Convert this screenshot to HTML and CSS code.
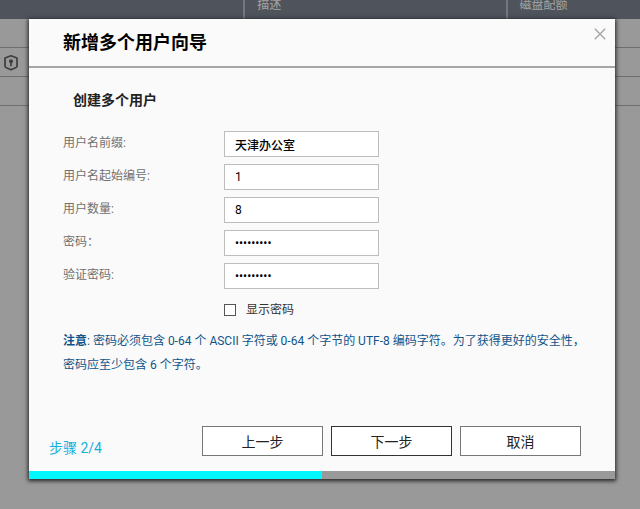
FILE: index.html
```html
<!DOCTYPE html>
<html lang="zh-CN">
<head>
    <meta charset="UTF-8">
    <meta name="viewport" content="width=device-width, initial-scale=1.0">
    <title>新增多个用户向导</title>
    <link rel="stylesheet" href="styles.css">
</head>
<body>
    <table class="user-table">
        <thead>
            <tr>
                <th class="col-name"></th>
                <th class="col-desc">描述</th>
                <th class="col-quota">磁盘配额</th>
            </tr>
        </thead>
        <tbody>
            <tr><td colspan="3"></td></tr>
            <tr>
                <td colspan="3">
                    <svg class="shield" viewBox="0 0 16 18" width="16" height="18">
                        <path d="M8 2.8 L14 5 V13.2 C14 14.2 11.4 15.4 8 16.8 C4.6 15.4 2 14.2 2 13.2 V5 Z" fill="none" stroke="#3d3d3d" stroke-width="1.7" stroke-linejoin="round"/>
                        <circle cx="8" cy="8.2" r="2" fill="#3d3d3d"/>
                        <path d="M7.2 9 H8.8 V13.2 H7.2 Z" fill="#3d3d3d"/>
                    </svg>
                </td>
            </tr>
            <tr><td colspan="3"></td></tr>
        </tbody>
    </table>

    <div class="overlay">
        <form class="wizard" role="dialog" aria-labelledby="wizardTitle">
            <header class="wizard-header">
                <h1 id="wizardTitle">新增多个用户向导</h1>
                <button type="button" class="close-button" aria-label="关闭">
                    <svg viewBox="0 0 12 12" width="12" height="12">
                        <path d="M0.8 0.8 L11.2 11.2 M11.2 0.8 L0.8 11.2" fill="none" stroke="#a6a6a6" stroke-width="1.5"/>
                    </svg>
                </button>
            </header>

            <div class="wizard-body">
                <h2>创建多个用户</h2>
                <div class="fields">
                    <label for="prefix">用户名前缀:</label>
                    <input type="text" id="prefix" value="天津办公室">
                    <label for="startNumber">用户名起始编号:</label>
                    <input type="text" id="startNumber" value="1">
                    <label for="userCount">用户数量:</label>
                    <input type="text" id="userCount" value="8">
                    <label for="password">密码：</label>
                    <input type="password" id="password" value="123456789">
                    <label for="verify">验证密码:</label>
                    <input type="password" id="verify" value="123456789">
                    <div class="show-password">
                        <input type="checkbox" id="showPassword">
                        <label for="showPassword">显示密码</label>
                    </div>
                </div>
                <p class="note"><b>注意</b>: 密码必须包含 0-64 个 ASCII 字符或 0-64 个字节的 UTF-8 编码字符。为了获得更好的安全性，密码应至少包含 6 个字符。</p>
            </div>

            <footer class="wizard-footer">
                <span class="step">步骤 2/4</span>
                <button type="button">上一步</button>
                <button type="button" class="next">下一步</button>
                <button type="button">取消</button>
            </footer>
            <div class="progress"><div class="progress-value" style="width: 50%"></div></div>
        </form>
    </div>
</body>
</html>
```
FILE: styles.css
```css
* {
    margin: 0;
    padding: 0;
    box-sizing: border-box;
}
body {
    background: #999;
    min-height: 100vh;
    font-family: Roboto, "Noto Sans CJK SC", sans-serif;
    font-size: 12px;
}
button, input {
    font-family: inherit;
}

/* user list behind the wizard */
.user-table {
    width: 100%;
    table-layout: fixed;
    border-collapse: separate;
    border-spacing: 0;
}
.user-table th {
    height: 19px;
    background: #4e535c;
    color: #999;
    font-weight: 500;
    line-height: 10px;
    text-align: left;
    vertical-align: top;
    padding-left: 12px;
}
.col-name {
    width: 38%;
}
.col-desc {
    width: 41%;
}
.col-desc, .col-quota {
    border-left: 2px solid #74777d;
}
.user-table td {
    height: 29px;
    border-bottom: 1px solid #6e6e6e;
    padding-left: 3px;
    vertical-align: middle;
}
.shield {
    display: block;
}

/* wizard */
.overlay {
    position: absolute;
    inset: 0;
    padding: 19px 25px 30px 29px;
    display: flex;
}
.wizard {
    flex: 1;
    display: flex;
    flex-direction: column;
    background: #fafafa;
    box-shadow: 0 1px 4px 1px #222;
}
.wizard-header {
    display: flex;
    align-items: flex-start;
    justify-content: space-between;
    padding: 9px 9px 8px 34px;
    border-bottom: 2px solid #a6a6a6;
}
.wizard-header h1 {
    font-size: 18px;
    font-weight: 700;
    line-height: 30px;
    color: #000;
}
.close-button {
    border: none;
    background: none;
    line-height: 0;
    cursor: pointer;
}
.wizard-body {
    flex: 1;
    padding: 20px 20px 0 34px;
}
.wizard-body h2 {
    font-size: 14px;
    font-weight: 700;
    line-height: 24px;
    color: #222;
    padding-left: 10px;
}
.fields {
    display: grid;
    grid-template-columns: 161px 155px;
    row-gap: 7px;
    margin-top: 19px;
}
.fields label {
    line-height: 24px;
    color: #707070;
}
.fields input[type="text"],
.fields input[type="password"] {
    height: 26px;
    border: 1px solid #bdbdbd;
    background: #fff;
    padding: 0 10px;
    font-size: 12px;
    color: #000;
}
.fields #prefix {
    font-weight: 500;
}
.show-password {
    grid-column: 2;
    display: flex;
    align-items: center;
    gap: 10px;
}
.show-password input {
    appearance: none;
    width: 12px;
    height: 12px;
    border: 1px solid #555;
    background: #fff;
}
.fields .show-password label {
    line-height: 28px;
    color: #333;
}
.note {
    margin-top: 5px;
    line-height: 24px;
    color: #10548a;
}
.note b {
    font-weight: 700;
}
.wizard-footer {
    display: flex;
    align-items: flex-start;
    gap: 8px;
    padding: 0 34px 15px 20px;
}
.step {
    flex: 1;
    align-self: flex-end;
    font-size: 14px;
    line-height: 16px;
    color: #13b1dc;
}
.wizard-footer button {
    width: 121px;
    height: 30px;
    border: 1px solid #777;
    background: #fff;
    font-size: 14px;
    color: #222;
    cursor: pointer;
}
.wizard-footer .next {
    border-color: #333;
}
.progress {
    height: 8px;
    background: #999;
}
.progress-value {
    height: 100%;
    background: #00f7ff;
}
```
